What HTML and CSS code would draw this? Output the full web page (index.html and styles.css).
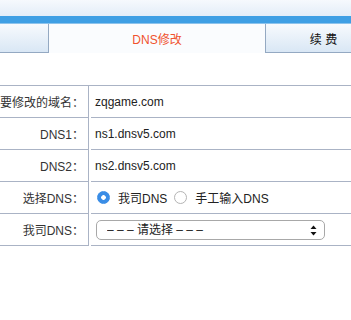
FILE: index.html
```html
<!DOCTYPE html>
<html lang="zh-CN">
<head>
  <meta charset="UTF-8">
  <title>DNS修改</title>
  <link rel="stylesheet" href="styles.css">
</head>
<body>

  <div class="header">
    <div class="topbar"></div>
    <div class="bluebar"></div>
    <div class="tabs">
      <div class="tab tab-left"></div>
      <div class="tab tab-active">DNS修改</div>
      <div class="tab tab-right">续 费</div>
    </div>
  </div>

  <!-- DNS form -->
  <div class="form-table">
    <div class="row">
      <div class="label"><span>要修改的域名：</span></div>
      <div class="value">zqgame.com</div>
    </div>
    <div class="row">
      <div class="label"><span>DNS1：</span></div>
      <div class="value">ns1.dnsv5.com</div>
    </div>
    <div class="row">
      <div class="label"><span>DNS2：</span></div>
      <div class="value">ns2.dnsv5.com</div>
    </div>
    <div class="row">
      <div class="label"><span>选择DNS：</span></div>
      <div class="value">
        <label class="radio"><input type="radio" name="dnsType" checked> 我司DNS</label>
        <label class="radio"><input type="radio" name="dnsType"> 手工输入DNS</label>
      </div>
    </div>
    <div class="row">
      <div class="label"><span>我司DNS：</span></div>
      <div class="value">
        <div class="select-wrap">
          <select name="ourDns">
            <option value="">– – – 请选择 – – –</option>
          </select>
          <svg class="select-arrows" width="7" height="11" viewBox="0 0 7 11">
            <path d="M3.5 0.5 L6.5 4 L0.5 4 Z" fill="#111"/>
            <path d="M3.5 10.5 L6.5 7 L0.5 7 Z" fill="#111"/>
          </svg>
        </div>
      </div>
    </div>
  </div>

</body>
</html>
```

FILE: styles.css
```css
* {
  box-sizing: border-box;
}

html, body {
  overflow: hidden;
}

body {
  margin: 0;
  padding: 0;
  background-color: #fff;
  font-family: "Liberation Sans", "Noto Sans CJK SC", sans-serif;
  font-size: 12px;
  color: #333;
}

.topbar {
  height: 16px;
  background: linear-gradient(#f6f9fd, #e3edf8);
}

.bluebar {
  height: 7px;
  background-color: #3f9fe4;
  border-bottom: 1px solid #8cc3ec;
  box-sizing: content-box;
}

.tabs {
  display: flex;
  height: 29px;
}

.tab {
  display: flex;
  align-items: center;
  justify-content: center;
  height: 29px;
}

.tab-left {
  width: 49px;
  background: linear-gradient(#f7fafd, #d9e7f5);
  border-right: 1px solid #94a9c2;
  border-bottom: 1px solid #94a9c2;
}

.tab-active {
  width: 216px;
  background-color: #fafcfe;
  color: #f0532f;
}

.tab-right {
  flex: 1;
  padding-left: 30px;
  background: linear-gradient(#f7fafd, #d9e7f5);
  border-left: 1px solid #94a9c2;
  border-bottom: 1px solid #94a9c2;
  color: #111;
}

.form-table {
  margin-top: 32px;
  border-top: 1px solid #aab3c5;
}

.row {
  display: grid;
  grid-template-columns: 89px 1fr;
  column-gap: 2px;
  height: 32px;
}

.label {
  display: flex;
  justify-content: flex-end;
  align-items: center;
  padding-right: 4px;
  white-space: nowrap;
  border-right: 1px solid #aab3c5;
  border-bottom: 1px solid #aab3c5;
  color: #333;
}

.value {
  display: flex;
  align-items: center;
  padding-left: 4px;
  white-space: nowrap;
  border-bottom: 1px solid #aab3c5;
  color: #222;
}

.radio {
  display: flex;
  align-items: center;
  margin-right: 5px;
}

.radio input {
  appearance: none;
  -webkit-appearance: none;
  width: 13px;
  height: 13px;
  margin: 0 8px 0 2px;
  border: 1px solid #b4b4b4;
  border-radius: 50%;
  background-color: #fff;
}

.radio input:checked {
  border-color: #3a8de6;
  background: radial-gradient(circle, #fff 0, #fff 2px, #3a8de6 2.6px);
}

.select-wrap {
  position: relative;
  margin-left: 1px;
  width: 229px;
  height: 20px;
}

select {
  appearance: none;
  -webkit-appearance: none;
  width: 100%;
  height: 20px;
  padding: 0 0 0 10px;
  border: 1px solid #a8a8a8;
  border-radius: 5px;
  background-color: #fff;
  font-family: "Liberation Sans", "Noto Sans CJK SC", sans-serif;
  font-size: 12px;
  color: #222;
}

.select-arrows {
  position: absolute;
  right: 8px;
  top: 5px;
}
```
